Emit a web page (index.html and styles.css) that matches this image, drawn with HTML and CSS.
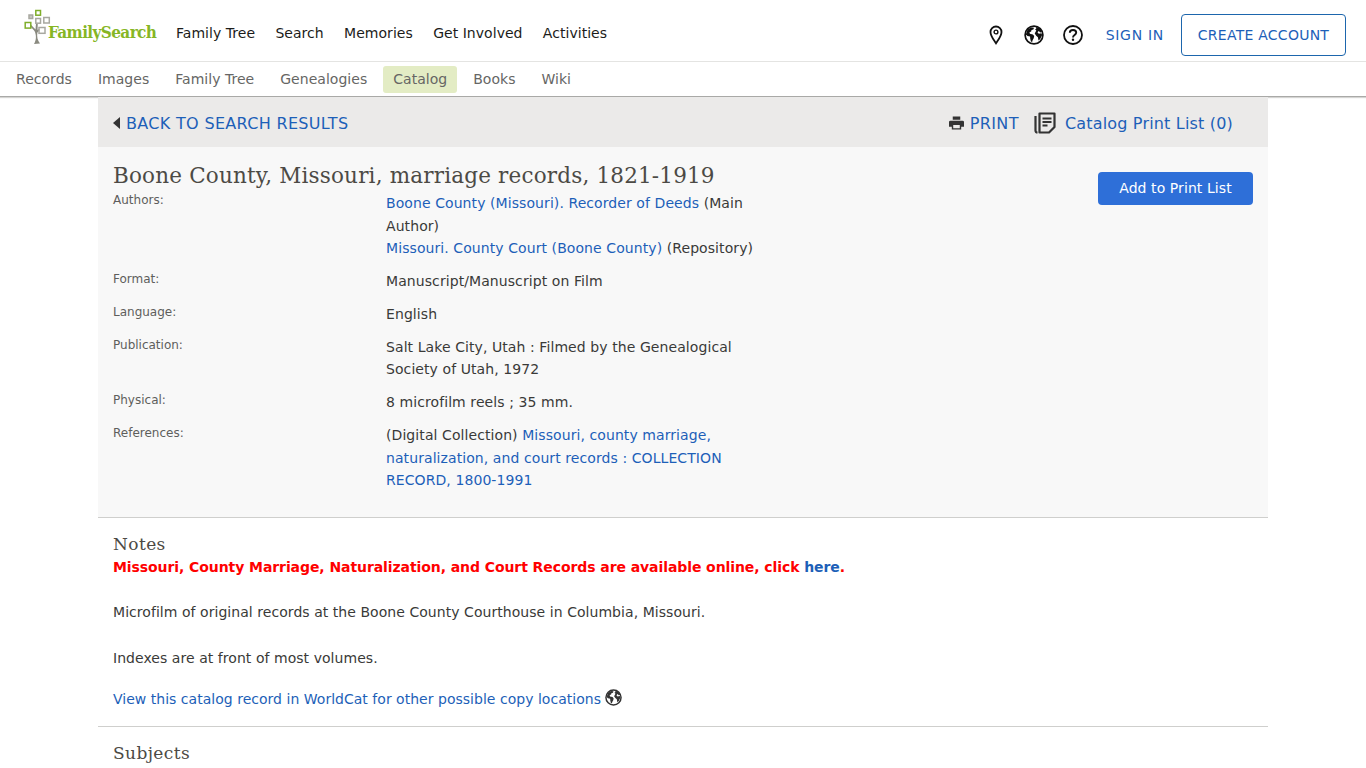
FILE: index.html
```html
<!DOCTYPE html>
<html lang="en">
<head>
<meta charset="utf-8">
<title>Boone County, Missouri, marriage records, 1821-1919</title>
<link rel="stylesheet" href="styles.css">
</head>
<body>
<svg class="defs" width="0" height="0" aria-hidden="true">
  <symbol id="globe" viewBox="0 0 20 20">
    <circle cx="10" cy="10" r="8.9" fill="none" stroke="currentColor" stroke-width="1.7"/>
    <path fill="currentColor" d="M3.6 4.6 7 2.4l3 .3-.6 1.7-1.9.5-.3 1.6-1.7.7.4 1.6 3 .7 1.3 1.6-.5 2.2-1 1.6-.6 2-1.2-.5-.7-3-.1-2L3.500 11 1.800 9.500zM12 1.800l4 1.800 2 3.400-1.800.4-1.400-1.400-1.300 1.300 1.300 1.500 2.600-.5.800 1.700-2 4-1.700 1.500-.6-3.300-1.700-1.500-1.500-2.300 1.600-2.800-1.200-1.100 1.200-1z"/>
  </symbol>
</svg>

<header class="topbar">
  <a class="logo" href="#">
    <svg class="logo-tree" width="30" height="36" viewBox="0 0 30 36" aria-hidden="true">
      <path fill="#8a8a80" d="M10 35c2.500-4 2.500-9 .5-13L6 17l1.200-1 4.300 4.500.5-6h1.800l-.3 6.500 1-1 1.400.8-2.600 3c-.4 4.500.1 7.500 2.700 10.700z"/>
      <g fill="none" stroke-width="1.500">
        <rect x="11.800" y="1.500" width="4.700" height="4.700" stroke="#7fae2a"/>
        <rect x="5" y="6" width="3.700" height="3.500" fill="#c8c8c2" stroke="#a8a8a0"/>
        <rect x="11.800" y="9.500" width="4.700" height="4.700" stroke="#a8a8a0"/>
        <rect x="19.800" y="8.500" width="5.500" height="5.500" stroke="#a8a8a0"/>
        <rect x="1.200" y="13.500" width="5.600" height="5.600" stroke="#7fae2a"/>
        <rect x="15" y="18.500" width="6" height="5.800" stroke="#a8a8a0"/>
      </g>
    </svg>
    <span class="logo-text">FamilySearch</span>
  </a>
  <nav class="mainnav">
    <a href="#">Family Tree</a>
    <a href="#">Search</a>
    <a href="#">Memories</a>
    <a href="#">Get Involved</a>
    <a href="#">Activities</a>
  </nav>
  <div class="account">
    <svg class="ico ico-pin" width="14" height="20" viewBox="0 0 14 20" aria-hidden="true">
      <path fill="none" stroke="currentColor" stroke-width="1.800" d="M7 18.300C4.500 14.500 1.500 11 1.500 7a5.500 5.500 0 0 1 11 0c0 4-3 7.500-5.500 11.300z"/>
      <circle cx="7" cy="7" r="1.900" fill="none" stroke="currentColor" stroke-width="1.400"/>
    </svg>
    <svg class="ico ico-globe" width="20" height="20" aria-hidden="true"><use href="#globe"/></svg>
    <svg class="ico ico-help" width="20" height="20" viewBox="0 0 20 20" aria-hidden="true">
      <circle cx="10" cy="10" r="9" fill="none" stroke="currentColor" stroke-width="1.800"/>
      <path fill="none" stroke="currentColor" stroke-width="1.900" d="M6.800 7.800C6.800 5.900 8.200 5 10 5s3.200 1 3.200 2.600c0 2.400-3.200 2.400-3.200 4.800"/>
      <circle cx="10" cy="14.700" r="1.200" fill="currentColor"/>
    </svg>
    <a class="signin" href="#">SIGN IN</a>
    <a class="create" href="#">CREATE ACCOUNT</a>
  </div>
</header>

<nav class="subnav">
  <a href="#">Records</a>
  <a href="#">Images</a>
  <a href="#">Family Tree</a>
  <a href="#">Genealogies</a>
  <a class="active" href="#">Catalog</a>
  <a href="#">Books</a>
  <a href="#">Wiki</a>
</nav>

<main class="page">
  <div class="toolbar">
    <a class="back" href="#"><span class="caret"></span>BACK TO SEARCH RESULTS</a>
    <div class="tools">
      <a class="print" href="#">
        <svg width="15" height="14" viewBox="0 0 16 14" aria-hidden="true">
          <path fill="#333" d="M4 0h8v3.500H4zM1.500 4.500h13A1.500 1.500 0 0 1 16 6v5h-3v3H3v-3H0V6a1.500 1.500 0 0 1 1.500-1.500zM4.500 9v3.500h7V9z"/>
        </svg>PRINT</a>
      <a class="list" href="#">
        <svg width="22" height="22" viewBox="0 0 22 22" aria-hidden="true">
          <path fill="none" stroke="#333" stroke-width="2.200" stroke-linejoin="round" d="M1.500 4v14.500a2 2 0 0 0 2 2M5.500 1.500h15v13.500l-5.500 5.500H5.500z"/>
          <path fill="none" stroke="#333" stroke-width="2" d="M8.500 6.500h9M8.500 10h9M8.500 13.500h5"/>
        </svg>Catalog Print List (0)</a>
    </div>
  </div>

  <section class="record">
    <div class="record-main">
      <h1>Boone County, Missouri, marriage records, 1821-1919</h1>
      <dl class="fields">
        <dt class="first">Authors:</dt>
        <dd class="first"><a href="#">Boone County (Missouri). Recorder of Deeds</a> (Main Author)<br><a href="#">Missouri. County Court (Boone County)</a> (Repository)</dd>
        <dt>Format:</dt>
        <dd>Manuscript/Manuscript on Film</dd>
        <dt>Language:</dt>
        <dd>English</dd>
        <dt>Publication:</dt>
        <dd>Salt Lake City, Utah : Filmed by the Genealogical Society of Utah, 1972</dd>
        <dt>Physical:</dt>
        <dd>8 microfilm reels ; 35 mm.</dd>
        <dt>References:</dt>
        <dd>(Digital Collection) <a href="#">Missouri, county marriage, naturalization, and court records : COLLECTION RECORD, 1800-1991</a></dd>
      </dl>
    </div>
    <a class="add" href="#">Add to Print List</a>
  </section>

  <section class="notes">
    <h2>Notes</h2>
    <p class="alert">Missouri, County Marriage, Naturalization, and Court Records are available online, click <a href="#">here</a>.</p>
    <p class="note">Microfilm of original records at the Boone County Courthouse in Columbia, Missouri.</p>
    <p class="note">Indexes are at front of most volumes.</p>
    <p class="worldcat"><a href="#">View this catalog record in WorldCat for other possible copy locations</a><svg class="wc-globe" width="17" height="17" aria-hidden="true"><use href="#globe"/></svg></p>
  </section>

  <section class="subjects">
    <h2>Subjects</h2>
  </section>
</main>
</body>
</html>
```
FILE: styles.css
```css
* { box-sizing: border-box; }
html, body { margin: 0; height: 768px; overflow: hidden; }
body {
  background: #fff;
  color: #3a3a38;
  font-family: "DejaVu Sans", Verdana, sans-serif;
  font-size: 14px;
}
a { color: #1d5fb8; text-decoration: none; }
.defs { position: absolute; }

.topbar {
  display: flex;
  align-items: center;
  height: 62px;
  padding: 0 20px 0 24px;
  border-bottom: 1px solid #e4e4e2;
}
.logo { position: relative; display: block; width: 152px; height: 46px; margin-bottom: 8px; }
.logo-tree { position: absolute; left: 0; top: 5px; }
.logo-text {
  position: absolute;
  left: 24px;
  top: 18px;
  color: #86b625;
  font-family: "DejaVu Serif Condensed", "DejaVu Serif", serif;
  font-stretch: condensed;
  font-weight: 700;
  font-size: 17px;
  letter-spacing: -.62px;
  white-space: nowrap;
}
.mainnav { display: flex; gap: 20.3px; margin-top: 4px; letter-spacing: .04px; }
.mainnav a { color: #1c1c1a; }
.account { display: flex; align-items: center; margin-left: auto; color: #111; margin-top: 9px; }
.ico { display: block; flex: none; }
.ico-pin { margin-right: 21px; }
.ico-globe { margin-right: 19px; }
.ico-help { margin-right: 23px; }
.signin { letter-spacing: .7px; margin-right: 17px; }
.create {
  display: block;
  height: 42px;
  width: 165px;
  line-height: 40px;
  text-align: center;
  border: 1px solid #1d66ad;
  border-radius: 4px;
  letter-spacing: .25px;
}

.subnav {
  display: flex;
  align-items: center;
  height: 35px;
  padding-left: 6px;
  border-bottom: 1px solid #a9a9a7;
  box-shadow: 0 1px 1px #d5d5d3;
  letter-spacing: .03px;
}
.subnav a { color: #666664; padding: 0 10px; margin-right: 6px; height: 27px; line-height: 27px; border-radius: 3px; }
.subnav .active { background: #e3ecc4; }

.page { width: 1170px; margin: 0 auto 0 98px; }
.toolbar {
  display: flex;
  align-items: center;
  justify-content: space-between;
  height: 50px;
  padding: 2px 35px 0 15px;
  background: #ebeae9;
  font-size: 16px;
}
.back { display: flex; align-items: center; letter-spacing: .32px; }
.caret {
  width: 0;
  height: 0;
  margin-right: 6px;
  border: 6px solid transparent;
  border-left-width: 0;
  border-right: 7px solid #333;
}
.tools { display: flex; align-items: center; }
.print { display: flex; align-items: center; gap: 6px; margin-right: 15px; letter-spacing: .4px; }
.list { display: flex; align-items: center; gap: 9px; letter-spacing: .18px; }

.record {
  display: flex;
  justify-content: space-between;
  align-items: flex-start;
  height: 371px;
  padding: 16px 15px 0;
  background: #f8f8f8;
  border-bottom: 1px solid #cfcfcd;
}
.record-main { width: 660px; }
h1, h2 {
  margin: 0;
  font-family: "DejaVu Serif", serif;
  font-weight: 400;
  color: #4c4a45;
}
h1 { font-size: 21.500px; line-height: 26px; letter-spacing: .18px; white-space: nowrap; }
h2 { font-size: 17px; line-height: 22px; letter-spacing: .4px; }
.fields {
  display: grid;
  grid-template-columns: 273px 380px;
  margin: 0;
  line-height: 22.400px;
}
.fields dt { font-size: 12px; color: #5e5e5c; padding-top: 10.400px; line-height: 18px; }
.fields dd { margin: 0; padding-top: 10.600px; letter-spacing: .08px; }
.fields dt.first { padding-top: 2px; }
.fields dd.first { padding-top: 3.200px; }
.add {
  display: block;
  width: 155px;
  height: 33px;
  margin-top: 9px;
  line-height: 32px;
  text-align: center;
  color: #fff;
  background: #2e6fd8;
  border-radius: 4px;
  letter-spacing: .08px;
}

.notes { padding: 15px 15px 0; height: 209px; border-bottom: 1px solid #cfcfcd; }
.notes p { margin: 0; }
.alert { font-weight: 700; color: #f00; line-height: 23px; padding-top: 1px; letter-spacing: -.08px; }
.note { line-height: 23px; margin-top: 22px !important; letter-spacing: .05px; }
.note + .note { margin-top: 23px !important; }
.worldcat { display: flex; align-items: center; margin-top: 18px !important; line-height: 23px; letter-spacing: .02px; }
.wc-globe { color: #333; margin-left: 4px; margin-bottom: 4px; }
.subjects { padding: 15px 15px 0; }
```
